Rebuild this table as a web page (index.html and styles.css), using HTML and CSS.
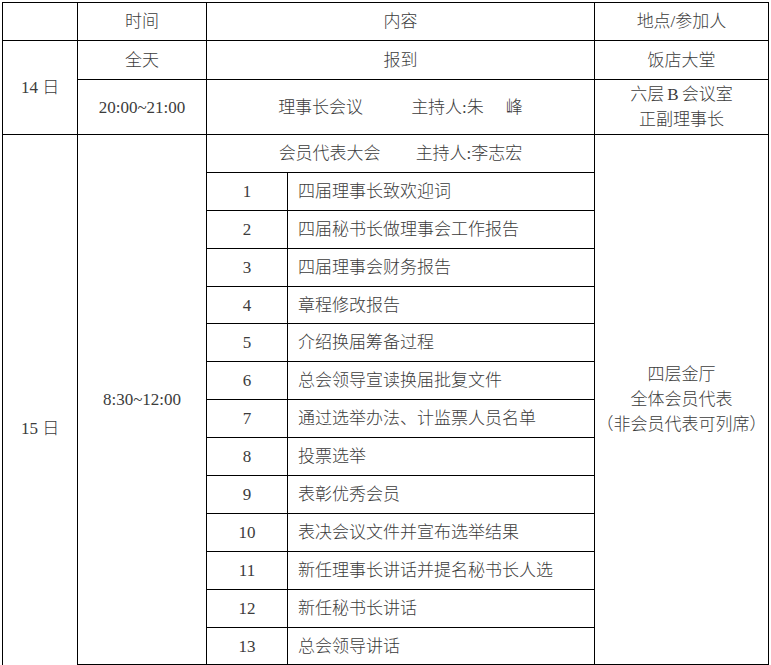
FILE: index.html
```html
<!DOCTYPE html>
<html lang="zh-CN">
<head>
<meta charset="utf-8">
<title>会议日程</title>
<link rel="stylesheet" href="styles.css">
</head>
<body>
<table class="agenda">
  <colgroup>
    <col class="c-day">
    <col class="c-time">
    <col class="c-num">
    <col class="c-item">
    <col class="c-place">
  </colgroup>
  <tr class="r-head">
    <td></td>
    <td>时间</td>
    <td colspan="2">内容</td>
    <td>地点/参加人</td>
  </tr>
  <tr class="r-h39">
    <td rowspan="2">14 日</td>
    <td>全天</td>
    <td colspan="2">报到</td>
    <td>饭店大堂</td>
  </tr>
  <tr class="r-h55">
    <td>20:00~21:00</td>
    <td colspan="2">理事长会议<span class="gap3"></span>主持人:朱<span class="gap1"></span>峰</td>
    <td>六层<span class="latin">B</span>会议室<br>正副理事长</td>
  </tr>
  <tr class="r-h38">
    <td rowspan="15">15 日</td>
    <td rowspan="14">8:30~12:00</td>
    <td colspan="2">会员代表大会<span class="gap2"></span>主持人:李志宏</td>
    <td rowspan="14">四层金厅<br>全体会员代表<br>（非会员代表可列席）</td>
  </tr>
  <tr class="r-h38"><td>1</td><td class="item">四届理事长致欢迎词</td></tr>
  <tr class="r-h38"><td>2</td><td class="item">四届秘书长做理事会工作报告</td></tr>
  <tr class="r-h38"><td>3</td><td class="item">四届理事会财务报告</td></tr>
  <tr class="r-h37"><td>4</td><td class="item">章程修改报告</td></tr>
  <tr class="r-h38"><td>5</td><td class="item">介绍换届筹备过程</td></tr>
  <tr class="r-h38"><td>6</td><td class="item">总会领导宣读换届批复文件</td></tr>
  <tr class="r-h38"><td>7</td><td class="item">通过选举办法、计监票人员名单</td></tr>
  <tr class="r-h38"><td>8</td><td class="item">投票选举</td></tr>
  <tr class="r-h38"><td>9</td><td class="item">表彰优秀会员</td></tr>
  <tr class="r-h38"><td>10</td><td class="item">表决会议文件并宣布选举结果</td></tr>
  <tr class="r-h38"><td>11</td><td class="item">新任理事长讲话并提名秘书长人选</td></tr>
  <tr class="r-h38"><td>12</td><td class="item">新任秘书长讲话</td></tr>
  <tr class="r-h37"><td>13</td><td class="item">总会领导讲话</td></tr>
  <tr class="r-tail">
    <td></td>
    <td colspan="2"></td>
    <td></td>
  </tr>
</table>
</body>
</html>
```

FILE: styles.css
```css
html, body {
  margin: 0;
  padding: 0;
  background: #fff;
}

body {
  padding: 2px 0 0 2px;
}

.agenda {
  border-collapse: collapse;
  table-layout: fixed;
  width: 766px;
  font-family: "Liberation Serif", "Noto Sans CJK SC", serif;
  font-size: 17px;
  font-weight: 300;
  color: #3c3c3c;
}

.c-day { width: 75px; }
.c-time { width: 129px; }
.c-num { width: 81px; }
.c-item { width: 307px; }
.c-place { width: 174px; }

.agenda td {
  border: 1px solid #000;
  padding: 0;
  text-align: center;
  vertical-align: middle;
  line-height: 25px;
  white-space: nowrap;
}

.agenda td.item {
  text-align: left;
  padding-left: 10px;
}

.r-head td { height: 37px; }
.r-h39 td { height: 38px; }
.r-h55 td { height: 54px; }
.r-h38 td { height: 37px; }
.r-h37 td { height: 36px; }
.r-tail td { height: 57px; }

.gap1 { display: inline-block; width: 22px; }
.gap2 { display: inline-block; width: 35px; }
.gap3 { display: inline-block; width: 48px; }

.latin { margin: 0 3px; }
```
